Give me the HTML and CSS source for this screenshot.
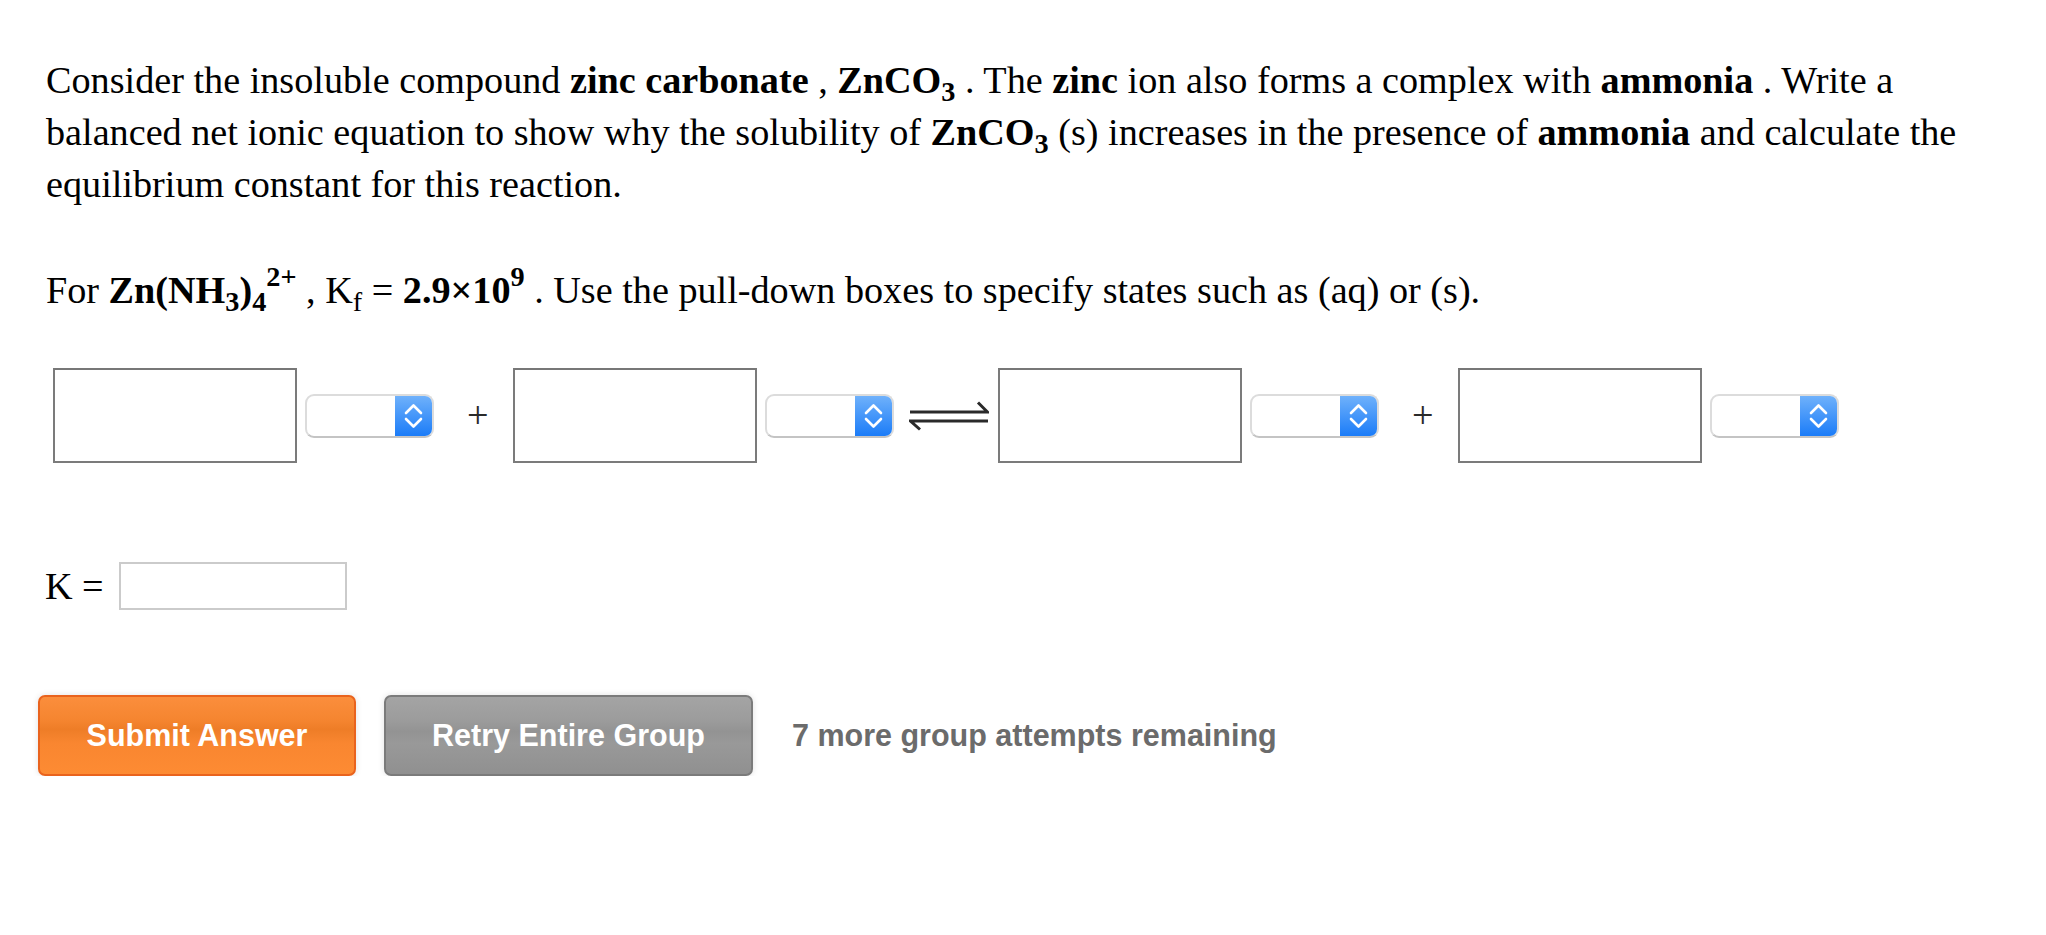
FILE: index.html
```html
<!DOCTYPE html>
<html lang="en">
<head>
<meta charset="utf-8">
<title>Zinc carbonate question</title>
<link rel="stylesheet" href="styles.css">
</head>
<body>
<div class="page">
  <p class="prompt">Consider the insoluble compound <b>zinc carbonate</b> , <b>ZnCO<sub>3</sub></b> . The <b>zinc</b> ion also forms a complex with <b>ammonia</b> . Write a balanced net ionic equation to show why the solubility of <b>ZnCO<sub>3</sub></b> (s) increases in the presence of <b>ammonia</b> and calculate the equilibrium constant for this reaction.</p>
  <p class="prompt given">For <b>Zn(NH<sub>3</sub>)<sub>4</sub><sup>2+</sup></b> , K<sub>f</sub> = <b>2.9×10<sup>9</sup></b> . Use the pull-down boxes to specify states such as (aq) or (s).</p>

  <div class="equation">
    <span class="field"></span>
    <span class="state"><span class="state-btn"><svg width="37" height="40" viewBox="0 0 37 40"><path d="M11 17 L18.5 9.5 L26 17 M11 23 L18.5 30.5 L26 23" fill="none" stroke="#fff" stroke-width="2.6" stroke-linecap="round" stroke-linejoin="round"/></svg></span></span>
    <span class="op">+</span>
    <span class="field"></span>
    <span class="state"><span class="state-btn"><svg width="37" height="40" viewBox="0 0 37 40"><path d="M11 17 L18.5 9.5 L26 17 M11 23 L18.5 30.5 L26 23" fill="none" stroke="#fff" stroke-width="2.6" stroke-linecap="round" stroke-linejoin="round"/></svg></span></span>
    <span class="equil"><svg width="80" height="30" viewBox="0 0 80 30"><path d="M1 11 H78.5 L69 1.5 M79 20 H1.5 L11 28.5" fill="none" stroke="#2a2a2a" stroke-width="3" stroke-linejoin="miter"/></svg></span>
    <span class="field"></span>
    <span class="state"><span class="state-btn"><svg width="37" height="40" viewBox="0 0 37 40"><path d="M11 17 L18.5 9.5 L26 17 M11 23 L18.5 30.5 L26 23" fill="none" stroke="#fff" stroke-width="2.6" stroke-linecap="round" stroke-linejoin="round"/></svg></span></span>
    <span class="op">+</span>
    <span class="field"></span>
    <span class="state"><span class="state-btn"><svg width="37" height="40" viewBox="0 0 37 40"><path d="M11 17 L18.5 9.5 L26 17 M11 23 L18.5 30.5 L26 23" fill="none" stroke="#fff" stroke-width="2.6" stroke-linecap="round" stroke-linejoin="round"/></svg></span></span>
  </div>

  <div class="k-row">
    <span class="k-label">K =</span>
    <span class="k-input"></span>
  </div>

  <div class="actions">
    <button class="btn btn-submit" type="button">Submit Answer</button>
    <button class="btn btn-retry" type="button">Retry Entire Group</button>
    <span class="remaining">7 more group attempts remaining</span>
  </div>
</div>
</body>
</html>
```

FILE: styles.css
```css
html, body {
  margin: 0;
  padding: 0;
  background: #fff;
}

.page {
  padding-top: 54px;
  font-family: "Liberation Serif", "Times New Roman", serif;
  font-size: 38.2px;
  color: #000;
}

.prompt {
  margin: 0;
  padding: 0 47px 0 46px;
  line-height: 52px;
}

.prompt sub {
  font-size: 0.74em;
  vertical-align: -0.3em;
  line-height: 0;
}

.prompt sup {
  font-size: 0.74em;
  vertical-align: 0.6em;
  line-height: 0;
}

.given {
  margin-top: 54px;
}

.equation {
  display: flex;
  align-items: center;
  height: 95px;
  margin-top: 52px;
  padding-left: 53px;
}

.field {
  box-sizing: border-box;
  width: 244px;
  height: 95px;
  border: 2px solid #7b7b7b;
  border-top-color: #777;
  background: #fff;
}

.state {
  box-sizing: border-box;
  display: flex;
  justify-content: flex-end;
  width: 129px;
  height: 44px;
  margin-left: 8px;
  border: 2px solid #dcdcdc;
  border-bottom-color: #c4c4c4;
  border-radius: 9px;
  background: #fff;
  overflow: hidden;
}

.state-btn {
  display: flex;
  width: 37px;
  height: 100%;
  background: linear-gradient(#6fb1fb, #1b7cf8);
}

.state-btn svg {
  display: block;
}

.op {
  width: 20px;
  margin: 0 26px 0 33px;
  line-height: 1;
  color: #2a2a2a;
  text-align: center;
}

.equil {
  display: flex;
  width: 80px;
  margin: 0 9px 0 15px;
}

.k-row {
  display: flex;
  align-items: center;
  height: 48px;
  margin-top: 99px;
  padding-left: 45px;
  line-height: 52px;
}

.k-input {
  box-sizing: border-box;
  width: 228px;
  height: 48px;
  margin-left: 15px;
  border: 2px solid #cbcbcb;
  background: #fff;
}

.actions {
  display: flex;
  align-items: center;
  margin-top: 85px;
  padding-left: 38px;
}

.btn {
  box-sizing: border-box;
  height: 81px;
  margin: 0;
  padding: 0 46px;
  border: 2px solid;
  border-radius: 7px;
  font-family: "Liberation Sans", Arial, sans-serif;
  font-size: 30.5px;
  font-weight: bold;
  color: #fff;
  box-shadow: 0 0 6px rgba(0, 0, 0, 0.12);
}

.btn-submit {
  width: 318px;
  border-color: #e9631d;
  background: linear-gradient(#fb8e3c 0%, #f58530 30%, #ee7d27 42%, #f98630 60%, #fd8b33 100%);
}

.btn-retry {
  width: 369px;
  margin-left: 28px;
  border-color: #7b7b7b;
  background: linear-gradient(#a4a4a4 0%, #9c9c9c 30%, #939393 45%, #999 60%, #909090 100%);
}

.remaining {
  margin-left: 39px;
  font-family: "Liberation Sans", Arial, sans-serif;
  font-size: 30.5px;
  font-weight: bold;
  color: #6b6b6b;
}
```
